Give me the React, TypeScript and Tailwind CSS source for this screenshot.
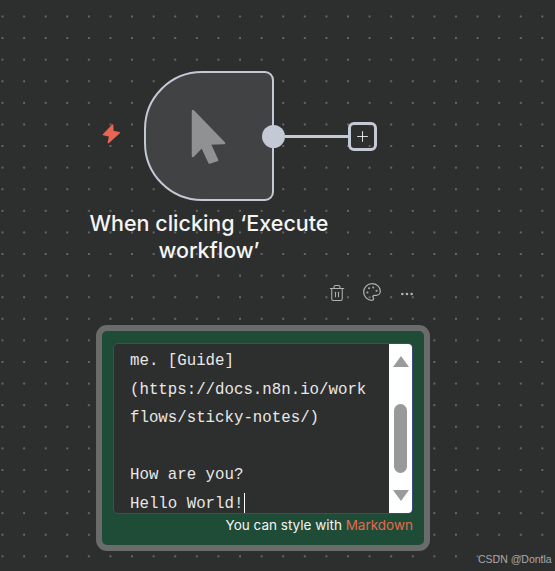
import React from 'react';
import { Palette, Plus, Trash2, Ellipsis } from 'lucide-react';

const noteLines = ['me. [Guide]', '(https://docs.n8n.io/work', 'flows/sticky-notes/)', '\u00a0', 'How are you?', 'Hello World!'];

const TriggerNode = () => (
  <div className="absolute left-[102px] top-[71px] flex items-center">
    <svg width="18" height="20" viewBox="0 0 54 60" className="mr-[24px] mt-[-4px]">
      <path d="M32 3 L4 32 L23 36 L19 56 L52 26 L33 22 Z" fill="#ea6552" stroke="#ea6552" strokeWidth="4" strokeLinejoin="round" />
    </svg>
    <div className="relative flex h-[130px] w-[130px] items-center justify-center rounded-l-[58px] rounded-r-[9px] border-2 border-[#c3c9d5] bg-[#414244]">
      <svg width="36" height="56" viewBox="0 0 36 56" className="ml-[-2px]">
        <path d="M3 3 L34 35 L19.5 35.5 L27 52 L19.5 54.5 L12 38.5 L3 48 Z" fill="#909192" stroke="#909192" strokeWidth="2.5" strokeLinejoin="round" />
      </svg>
      <div className="absolute left-[116px] top-[49px] flex items-center">
        <div className="h-[23px] w-[23px] rounded-full bg-[#c3c9d5]" />
        <div className="h-[3px] w-[63px] bg-[#c3c9d5]" />
        <div className="flex h-[29px] w-[29px] items-center justify-center rounded-[6px] border-[3px] border-[#c3c9d5]">
          <Plus size={17} strokeWidth={1.25} color="#f2f2f2" />
        </div>
      </div>
    </div>
  </div>
);

const Scrollbar = () => (
  <div className="flex w-[23px] flex-col items-center bg-white">
    <div className="mt-[12px] h-0 w-0 border-x-[8px] border-b-[11px] border-x-transparent border-b-[#9a9a9a]" />
    <div className="mt-[37px] h-[69px] w-[13px] rounded-[7px] bg-[#999999]" />
    <div className="mt-[17px] h-0 w-0 border-x-[8px] border-t-[11px] border-x-transparent border-t-[#9a9a9a]" />
  </div>
);

const StickyNote = () => (
  <div className="absolute left-[96px] top-[325px] flex h-[226px] w-[334px] flex-col rounded-[11px] border-[6px] border-[#6a6b6b] bg-[#1f4c36] pl-[11px] pr-[12px] pt-[12px]">
    <div className="mr-[-1px] flex h-[171px] overflow-hidden rounded-[5px] border border-[#3d4a78] bg-[#2d2e2e]">
      <div className="flex flex-1 flex-col gap-[10.6px] pl-[16px] pt-[8px] font-['Liberation_Mono',monospace] text-[15.75px] leading-[18px] text-[#e8e8e8]">
        {noteLines.map((line, i) => (
          <div key={i} className="whitespace-pre">
            {line}
            {i === noteLines.length - 1 && (
              <span className="relative">
                <span className="absolute left-[1px] top-[-2px] h-[21px] w-px bg-white" />
              </span>
            )}
          </div>
        ))}
      </div>
      <Scrollbar />
    </div>
    <div className="mr-[-1px] mt-[2px] text-right font-['Inter',sans-serif] text-[13.5px] leading-[18px] text-[#f4f4f4]">
      You can style with <span className="text-[#e5694f]">Markdown</span>
    </div>
  </div>
);

export default function App() {
  return (
    <div className="relative h-[571px] w-[555px] overflow-hidden bg-[#2d2e2e] bg-[radial-gradient(circle,#777878_0.6px,transparent_1px)] bg-[size:21.6px_21.6px] bg-[position:-8.3px_5.7px]">
      <TriggerNode />
      <div className="absolute left-[79px] top-[210px] w-[260px] text-center font-['Inter',sans-serif] text-[21.5px] font-medium leading-[27px] text-[#f5f5f5]">
        When clicking ‘Execute workflow’
      </div>
      <div className="absolute left-[328px] top-[284px] flex items-center text-[#b0b0b0]">
        <Trash2 size={18} strokeWidth={1.4} />
        <Palette size={20} strokeWidth={1.5} className="ml-[16px] mt-[-3px]" />
        <Ellipsis size={16} strokeWidth={2} className="ml-[17px] mt-[1px]" />
      </div>
      <StickyNote />
      <div className="absolute left-[478px] top-[552px] whitespace-nowrap font-['Liberation_Sans',sans-serif] text-[10.5px] leading-[14px] text-[#a9a9a9]">
        CSDN @Dontla
      </div>
    </div>
  );
}
